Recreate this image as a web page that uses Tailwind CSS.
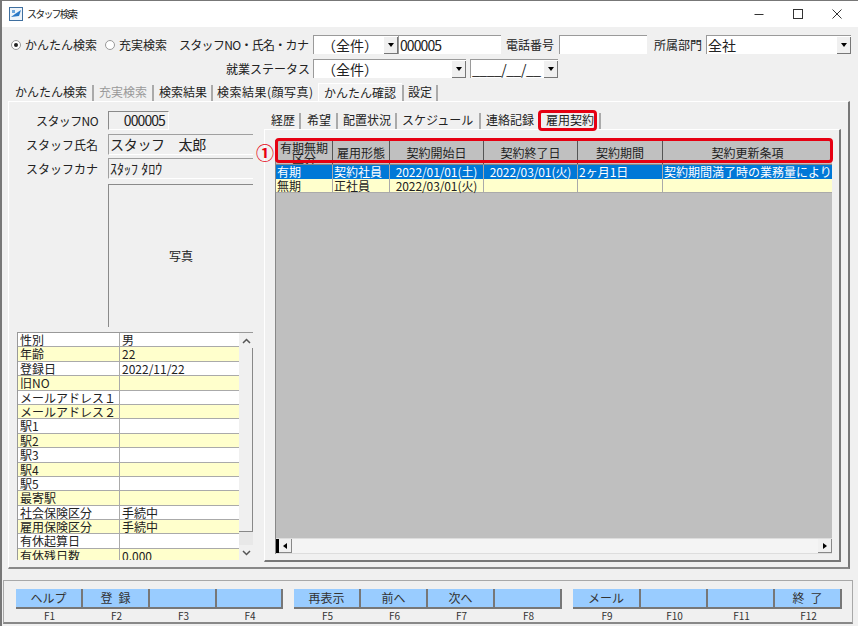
<!DOCTYPE html>
<html lang="ja">
<head>
<meta charset="UTF-8">
<title>スタッフ検索</title>
<script src="https://cdn.jsdelivr.net/npm/@tailwindcss/browser@4"></script>
</head>
<body class="bg-[#f0f0f0]">
<div class="relative w-[858px] h-[626px] overflow-hidden bg-[#f0f0f0] text-[12px] leading-[14px] text-[#222] font-['Noto_Sans_CJK_JP','Liberation_Sans',sans-serif] border-l-2 border-t border-[#777]">

  <!-- title bar -->
  <div class="h-[26px] bg-white flex items-center pl-[7px]">
    <svg width="14" height="14" viewBox="0 0 14 14" class="mr-[4px]"><rect x="0.5" y="0.5" width="13" height="13" fill="#eef4fa" stroke="#3f6f9f"/><path d="M2 10 L6 7 L12 3 L10 9 Z" fill="#2a78c5"/><rect x="3" y="3" width="3" height="3" fill="#6aa5dc"/></svg>
    <span class="text-[10px] tracking-[-1.8px]">スタッフ検索</span>
    <div class="ml-auto flex items-center">
      <svg width="12" height="12" viewBox="0 0 12 12" class="mr-[27px]"><path d="M1.5 6.5 H10.5" stroke="#333"/></svg>
      <svg width="12" height="12" viewBox="0 0 12 12" class="mr-[27px]"><rect x="1.5" y="1.5" width="9" height="9" fill="none" stroke="#333"/></svg>
      <svg width="12" height="12" viewBox="0 0 12 12" class="mr-[15px]"><path d="M1.5 1.5 L10.5 10.5 M10.5 1.5 L1.5 10.5" stroke="#333"/></svg>
    </div>
  </div>

  <!-- search rows -->
  <div class="h-[19px] mt-[8px] flex items-center pl-[9px] whitespace-nowrap">
    <span class="w-[10px] h-[10px] shrink-0 rounded-full border border-[#999] bg-white flex items-center justify-center mr-[4px]"><span class="w-[4px] h-[4px] rounded-full bg-[#222]"></span></span>
    <span class="w-[71px] shrink-0">かんたん検索</span>
    <span class="w-[10px] h-[10px] shrink-0 rounded-full border border-[#999] bg-white ml-[9px] mr-[4px]"></span>
    <span class="w-[47px] shrink-0">充実検索</span>
    <span class="w-[128px] shrink-0 ml-[13px] tracking-[-0.7px]">スタッフNO・氏名・カナ</span>
    <div class="ml-[6px] w-[85px] shrink-0 h-[19px] bg-white border-t border-l border-[#9a9a9a] flex items-center pl-[8px] text-[14px]">（全件）<span class="ml-auto w-[14px] h-[17px] bg-[#f0f0f0] border-r border-b border-[#777] flex items-center justify-center"><span class="border-x-[3px] border-t-[4px] border-x-transparent border-t-black"></span></span></div>
    <div class="w-[103px] shrink-0 h-[19px] bg-white border-t border-l border-[#9a9a9a] pl-[1px] text-[14px] leading-[18px] tracking-[-0.9px]">000005</div>
    <span class="ml-[5px] w-[48px] shrink-0">電話番号</span>
    <div class="ml-[5px] w-[88px] shrink-0 h-[19px] bg-white border-t border-l border-[#9a9a9a]"></div>
    <span class="ml-[7px] w-[48px] shrink-0">所属部門</span>
    <div class="ml-[4px] w-[145px] shrink-0 h-[19px] bg-white border-t border-l border-[#9a9a9a] flex items-center pl-[1px] text-[14px]">全社<span class="ml-auto w-[14px] h-[17px] bg-[#f0f0f0] border-r border-b border-[#777] flex items-center justify-center"><span class="border-x-[3px] border-t-[4px] border-x-transparent border-t-black"></span></span></div>
  </div>
  <div class="h-[19px] mt-[5px] flex items-center pl-[224px]">
    <span class="w-[81px] whitespace-nowrap">就業ステータス</span>
    <div class="ml-[6px] w-[153px] h-[19px] bg-white border-t border-l border-[#9a9a9a] flex items-center pl-[8px] text-[14px]">（全件）<span class="ml-auto w-[14px] h-[17px] bg-[#f0f0f0] border-r border-b border-[#777] flex items-center justify-center"><span class="border-x-[3px] border-t-[4px] border-x-transparent border-t-black"></span></span></div>
    <div class="ml-[4px] w-[88px] h-[19px] bg-white border-t border-l border-[#9a9a9a] flex items-center pl-[1px] text-[14px] whitespace-nowrap tracking-[-0.5px]">____/__/__<span class="ml-auto w-[14px] h-[17px] bg-[#f0f0f0] border-r border-b border-[#777] flex items-center justify-center"><span class="border-x-[3px] border-t-[4px] border-x-transparent border-t-black"></span></span></div>
  </div>

  <!-- outer tabs -->
  <div class="h-[18px] mt-[5px] flex items-end pl-[13px] whitespace-nowrap">
    <span class="w-[72px] h-[16px]">かんたん検索</span><span class="w-[12px] h-[16px] border-r-2 border-[#aaa] mr-[5px] -ml-[5px]"></span>
    <span class="w-[47px] h-[16px] text-[#999]">充実検索</span><span class="w-[8px] h-[16px] border-r-2 border-[#aaa] mr-[5px]"></span>
    <span class="w-[46px] h-[16px]">検索結果</span><span class="w-[8px] h-[16px] border-r-2 border-[#aaa] mr-[4px]"></span>
    <span class="w-[95px] h-[16px] tracking-[0.5px]">検索結果(顔写真)</span>
    <span class="ml-[6px] w-[84px] h-[18px] pt-[2px] pl-[5px] bg-[#f4f4f4] border-t border-l border-white">かんたん確認</span><span class="w-[2px] h-[16px] bg-[#aaa] mr-[4px]"></span>
    <span class="w-[24px] h-[16px]">設定</span><span class="w-[6px] h-[16px] border-r-2 border-[#aaa]"></span>
  </div>

  <!-- outer panel -->
  <div class="ml-[6px] w-[842px] h-[468px] border-t border-l border-white border-r-2 border-r-[#777] border-b-2 border-b-[#888] flex">
    <!-- left column -->
    <div class="w-[255px] shrink-0 flex flex-col">
      <div class="h-[19px] mt-[9px] flex items-center">
        <span class="w-[89px] text-right whitespace-nowrap tracking-[-0.6px]">スタッフNO</span>
        <div class="ml-[10px] w-[61px] h-[19px] border-t border-l border-[#8a8a8a] border-r border-r-white border-b border-b-white text-right pr-[3px] text-[14px] leading-[17px] tracking-[-0.9px]">000005</div>
      </div>
      <div class="h-[21px] mt-[4px] flex items-center">
        <span class="w-[89px] text-right whitespace-nowrap">スタッフ氏名</span>
        <div class="ml-[10px] w-[145px] h-[21px] border-t border-l border-[#a0a0a0] border-b border-b-white pl-[1px] text-[14px] leading-[19px] tracking-[-0.3px]">スタッフ　太郎</div>
      </div>
      <div class="h-[21px] mt-[3px] flex items-center">
        <span class="w-[89px] text-right whitespace-nowrap">スタッフカナ</span>
        <div class="ml-[10px] w-[145px] h-[21px] border-t border-l border-[#a0a0a0] border-b border-b-white pl-[1px] text-[14px] leading-[19px]">ｽﾀｯﾌ ﾀﾛｳ</div>
      </div>
      <div class="ml-[99px] mt-[5px] w-[145px] h-[143px] border-t border-l border-[#8a8a8a] flex items-center justify-center">写真</div>

      <!-- attribute list -->
      <div class="ml-[8px] mt-[5px] w-[236px] h-[228px] border-t border-l border-[#999] overflow-hidden flex">
        <div class="w-[221px] shrink-0 flex flex-col leading-[13px]">
          <div class="flex h-[14.4px] shrink-0 bg-white border-b border-[#aaa]"><span class="w-[102px] border-r border-[#aaa] pl-[2px]">性別</span><span class="pl-[2px]">男</span></div>
          <div class="flex h-[14.4px] shrink-0 bg-[#ffffcc] border-b border-[#aaa]"><span class="w-[102px] border-r border-[#aaa] pl-[2px]">年齢</span><span class="pl-[2px]">22</span></div>
          <div class="flex h-[14.4px] shrink-0 bg-white border-b border-[#aaa]"><span class="w-[102px] border-r border-[#aaa] pl-[2px]">登録日</span><span class="pl-[2px]">2022/11/22</span></div>
          <div class="flex h-[14.4px] shrink-0 bg-[#ffffcc] border-b border-[#aaa]"><span class="w-[102px] border-r border-[#aaa] pl-[2px]">旧NO</span><span class="pl-[2px]"></span></div>
          <div class="flex h-[14.4px] shrink-0 bg-white border-b border-[#aaa]"><span class="w-[102px] border-r border-[#aaa] pl-[2px] whitespace-nowrap">メールアドレス１</span><span class="pl-[2px]"></span></div>
          <div class="flex h-[14.4px] shrink-0 bg-[#ffffcc] border-b border-[#aaa]"><span class="w-[102px] border-r border-[#aaa] pl-[2px] whitespace-nowrap">メールアドレス２</span><span class="pl-[2px]"></span></div>
          <div class="flex h-[14.4px] shrink-0 bg-white border-b border-[#aaa]"><span class="w-[102px] border-r border-[#aaa] pl-[2px]">駅1</span><span class="pl-[2px]"></span></div>
          <div class="flex h-[14.4px] shrink-0 bg-[#ffffcc] border-b border-[#aaa]"><span class="w-[102px] border-r border-[#aaa] pl-[2px]">駅2</span><span class="pl-[2px]"></span></div>
          <div class="flex h-[14.4px] shrink-0 bg-white border-b border-[#aaa]"><span class="w-[102px] border-r border-[#aaa] pl-[2px]">駅3</span><span class="pl-[2px]"></span></div>
          <div class="flex h-[14.4px] shrink-0 bg-[#ffffcc] border-b border-[#aaa]"><span class="w-[102px] border-r border-[#aaa] pl-[2px]">駅4</span><span class="pl-[2px]"></span></div>
          <div class="flex h-[14.4px] shrink-0 bg-white border-b border-[#aaa]"><span class="w-[102px] border-r border-[#aaa] pl-[2px]">駅5</span><span class="pl-[2px]"></span></div>
          <div class="flex h-[14.4px] shrink-0 bg-[#ffffcc] border-b border-[#aaa]"><span class="w-[102px] border-r border-[#aaa] pl-[2px]">最寄駅</span><span class="pl-[2px]"></span></div>
          <div class="flex h-[14.4px] shrink-0 bg-white border-b border-[#aaa]"><span class="w-[102px] border-r border-[#aaa] pl-[2px]">社会保険区分</span><span class="pl-[2px]">手続中</span></div>
          <div class="flex h-[14.4px] shrink-0 bg-[#ffffcc] border-b border-[#aaa]"><span class="w-[102px] border-r border-[#aaa] pl-[2px]">雇用保険区分</span><span class="pl-[2px]">手続中</span></div>
          <div class="flex h-[14.4px] shrink-0 bg-white border-b border-[#aaa]"><span class="w-[102px] border-r border-[#aaa] pl-[2px]">有休起算日</span><span class="pl-[2px]"></span></div>
          <div class="flex h-[14.4px] shrink-0 bg-[#ffffcc] border-b border-[#aaa]"><span class="w-[102px] border-r border-[#aaa] pl-[2px]">有休残日数</span><span class="pl-[2px]">0.000</span></div>
        </div>
        <!-- vertical scrollbar -->
        <div class="flex-1 flex flex-col bg-[#e8e8e8]">
          <div class="h-[15px] bg-[#f0f0f0] flex items-center justify-center"><svg width="9" height="6" viewBox="0 0 9 6"><path d="M1 5 L4.5 1.5 L8 5" fill="none" stroke="#555" stroke-width="1.5"/></svg></div>
          <div class="h-[184px] bg-[#f0f0f0] border-r border-b border-[#888]"></div>
          <div class="flex-1"></div>
          <div class="h-[15px] bg-[#f0f0f0] flex items-center justify-center"><svg width="9" height="6" viewBox="0 0 9 6"><path d="M1 1 L4.5 4.5 L8 1" fill="none" stroke="#555" stroke-width="1.5"/></svg></div>
        </div>
      </div>
    </div>

    <!-- right column -->
    <div class="w-[577px] flex flex-col">
      <!-- inner tabs -->
      <div class="h-[18px] mt-[9px] flex items-end pl-[7px] whitespace-nowrap">
        <span class="w-[24px] h-[16px]">経歴</span><span class="w-[6px] h-[16px] border-r-2 border-[#aaa] mr-[6px]"></span>
        <span class="w-[24px] h-[16px]">希望</span><span class="w-[7px] h-[16px] border-r-2 border-[#aaa] mr-[5px]"></span>
        <span class="w-[47px] h-[16px]">配置状況</span><span class="w-[7px] h-[16px] border-r-2 border-[#aaa] mr-[5px]"></span>
        <span class="w-[71px] h-[16px]">スケジュール</span><span class="w-[8px] h-[16px] border-r-2 border-[#aaa] mr-[5px]"></span>
        <span class="w-[48px] h-[16px]">連絡記録</span>
        <span class="ml-[7px] w-[58px] h-[18px] pl-[5px] pt-[2px]">雇用契約</span><span class="w-[2px] h-[16px] bg-[#aaa]"></span>
      </div>
      <!-- inner panel -->
      <div class="w-[577px] h-[433px] border-t border-l border-white border-r-2 border-r-[#777] border-b-2 border-b-[#777] pt-[10px] pl-[10px]">
        <div class="w-[557px] h-[414px] border-t border-l border-[#888] flex flex-col bg-[#bfbfbf]">
          <!-- header -->
          <div class="h-[24px] shrink-0 flex text-center bg-[#c0c0c0] border-b border-[#888]">
            <div class="w-[57px] border-r border-[#555] text-[12px] leading-[11px] pt-[1px] overflow-hidden">有期無期<br>区分</div>
            <div class="w-[57px] border-r border-[#555] leading-[23px]">雇用形態</div>
            <div class="w-[94px] border-r border-[#555] leading-[23px]">契約開始日</div>
            <div class="w-[94px] border-r border-[#555] leading-[23px]">契約終了日</div>
            <div class="w-[85px] border-r border-[#555] leading-[23px]">契約期間</div>
            <div class="flex-1 leading-[23px]">契約更新条項</div>
          </div>
          <!-- rows -->
          <div class="h-[14px] shrink-0 flex bg-[#0078d7] text-white leading-[13px] whitespace-nowrap">
            <div class="w-[57px] border-r border-[#aaa] pl-[1px]">有期</div>
            <div class="w-[57px] border-r border-[#aaa] pl-[1px]">契約社員</div>
            <div class="w-[94px] border-r border-[#aaa] text-center tracking-[-0.1px]">2022/01/01(土)</div>
            <div class="w-[94px] border-r border-[#aaa] text-center tracking-[-0.1px]">2022/03/01(火)</div>
            <div class="w-[85px] border-r border-[#aaa] pl-[1px]">2ヶ月1日</div>
            <div class="flex-1 pl-[1px] overflow-hidden">契約期間満了時の業務量により</div>
          </div>
          <div class="h-[14px] shrink-0 flex bg-[#ffffcc] border-b border-[#aaa] leading-[13px] whitespace-nowrap">
            <div class="w-[57px] border-r border-[#aaa] pl-[1px]">無期</div>
            <div class="w-[57px] border-r border-[#aaa] pl-[1px]">正社員</div>
            <div class="w-[94px] border-r border-[#aaa] text-center tracking-[-0.1px]">2022/03/01(火)</div>
            <div class="w-[94px] border-r border-[#aaa]"></div>
            <div class="w-[85px] border-r border-[#aaa]"></div>
            <div class="flex-1"></div>
          </div>
          <div class="flex-1"></div>
          <!-- horizontal scrollbar -->
          <div class="h-[16px] shrink-0 flex bg-[#f4f4f4] border-t border-[#ddd] border-b border-b-[#ddd]">
            <div class="w-[3px] bg-black"></div>
            <div class="w-[13px] bg-[#f0f0f0] border-r border-b border-[#888] flex items-center justify-center"><span class="border-y-[3px] border-r-[4px] border-y-transparent border-r-black"></span></div>
            <div class="flex-1"></div>
            <div class="w-[14px] bg-[#f0f0f0] border-r border-b border-[#888] flex items-center justify-center"><span class="border-y-[3px] border-l-[4px] border-y-transparent border-l-black"></span></div>
          </div>
        </div>
      </div>
    </div>
  </div>

  <!-- function keys -->
  <div class="ml-[1px] mt-[11px] w-[850px] h-[44px] border border-[#a8a8a8] border-b-2 border-b-[#888] pl-[12px] pt-[8px] text-[#333]">
    <div class="flex h-[20px] text-center leading-[18px]">
      <div class="w-[67px] bg-[#99ccff] border-r-2 border-b-2 border-[#777]">ヘルプ</div>
      <div class="w-[67px] bg-[#99ccff] border-r-2 border-b-2 border-[#777] whitespace-pre">登&ensp;録</div>
      <div class="w-[67px] bg-[#99ccff] border-r-2 border-b-2 border-[#777]"></div>
      <div class="w-[66px] bg-[#99ccff] border-r-2 border-b-2 border-[#777]"></div>
      <div class="ml-[11px] w-[67px] bg-[#99ccff] border-r-2 border-b-2 border-[#777]">再表示</div>
      <div class="w-[67px] bg-[#99ccff] border-r-2 border-b-2 border-[#777]">前へ</div>
      <div class="w-[67px] bg-[#99ccff] border-r-2 border-b-2 border-[#777]">次へ</div>
      <div class="w-[67px] bg-[#99ccff] border-r-2 border-b-2 border-[#777]"></div>
      <div class="ml-[11px] w-[68px] bg-[#99ccff] border-r-2 border-b-2 border-[#777]">メール</div>
      <div class="w-[67px] bg-[#99ccff] border-r-2 border-b-2 border-[#777]"></div>
      <div class="w-[67px] bg-[#99ccff] border-r-2 border-b-2 border-[#777]"></div>
      <div class="w-[67px] bg-[#99ccff] border-r-2 border-b-2 border-[#777] whitespace-pre">終&ensp;了</div>
    </div>
    <div class="flex text-center text-[10px] leading-[14px]">
      <span class="w-[67px]">F1</span><span class="w-[67px]">F2</span><span class="w-[67px]">F3</span><span class="w-[66px]">F4</span>
      <span class="ml-[11px] w-[67px]">F5</span><span class="w-[67px]">F6</span><span class="w-[67px]">F7</span><span class="w-[67px]">F8</span>
      <span class="ml-[11px] w-[68px]">F9</span><span class="w-[67px]">F10</span><span class="w-[67px]">F11</span><span class="w-[67px]">F12</span>
    </div>
  </div>

  <!-- red annotations over the screenshot -->
  <div class="absolute left-[536px] top-[109px] w-[59px] h-[21px] border-[3px] border-[#e60012] rounded-[4px]"></div>
  <div class="absolute left-[273px] top-[137px] w-[558px] h-[25px] border-[3px] border-[#e60012] rounded-[4px]"></div>
  <div class="absolute left-[254px] top-[141px] text-[#e60012] text-[18px] leading-[20px] font-bold">①</div>
</div>
</body>
</html>
